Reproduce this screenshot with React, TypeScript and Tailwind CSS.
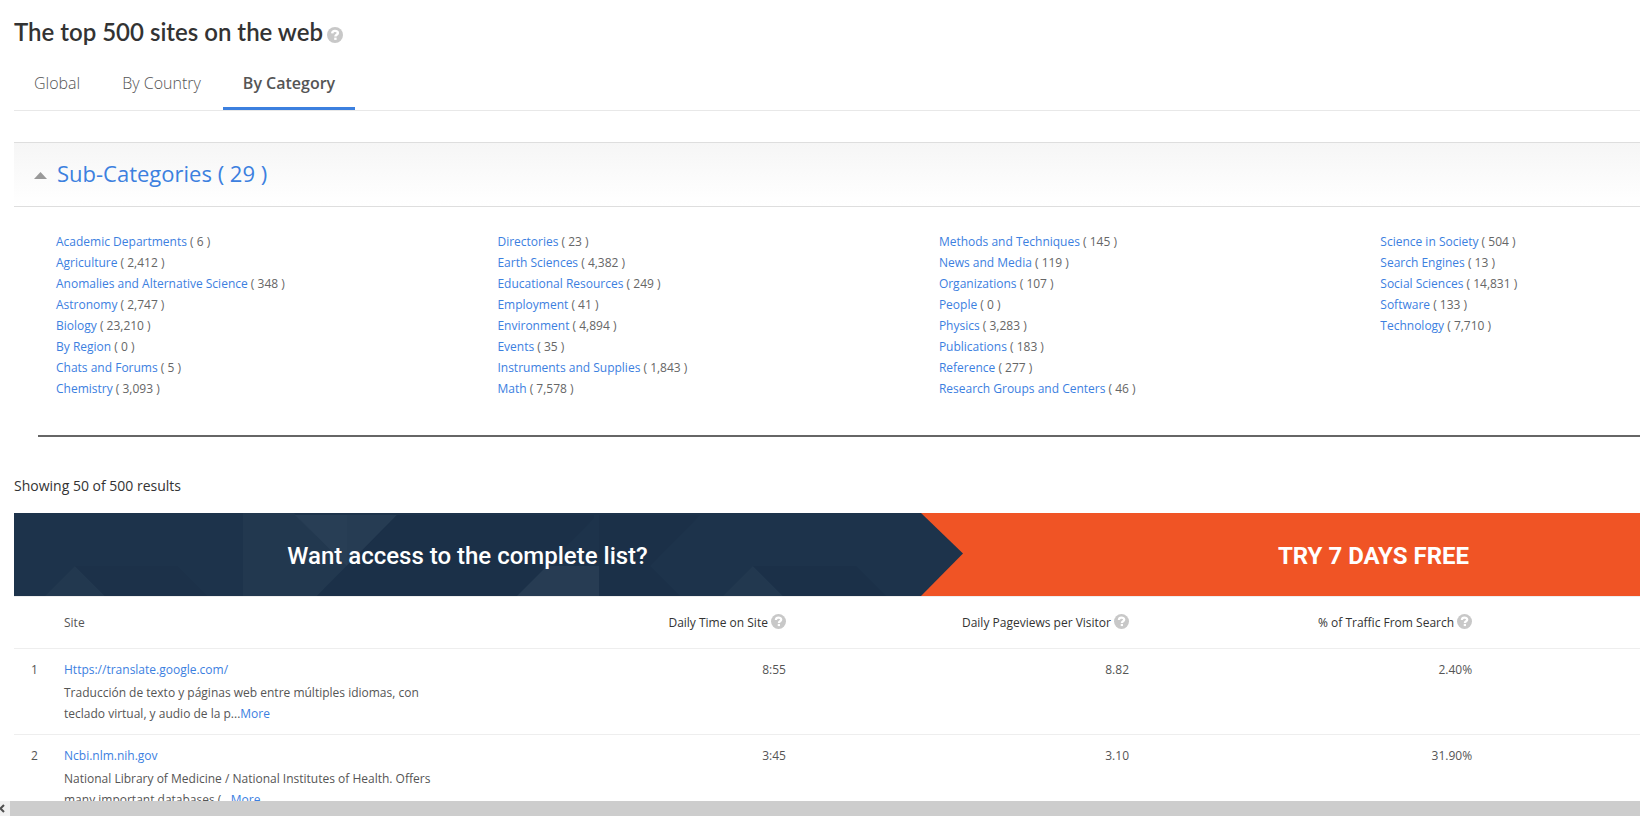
import { useState } from 'react';

interface Category {
  name: string;
  count: string;
}

interface Site {
  rank: number;
  name: string;
  description: string;
  time: string;
  pageviews: string;
  search: string;
}

const tabs = ['Global', 'By Country', 'By Category'];

const categoryColumns: Category[][] = [
  [
    { name: 'Academic Departments', count: '6' },
    { name: 'Agriculture', count: '2,412' },
    { name: 'Anomalies and Alternative Science', count: '348' },
    { name: 'Astronomy', count: '2,747' },
    { name: 'Biology', count: '23,210' },
    { name: 'By Region', count: '0' },
    { name: 'Chats and Forums', count: '5' },
    { name: 'Chemistry', count: '3,093' },
  ],
  [
    { name: 'Directories', count: '23' },
    { name: 'Earth Sciences', count: '4,382' },
    { name: 'Educational Resources', count: '249' },
    { name: 'Employment', count: '41' },
    { name: 'Environment', count: '4,894' },
    { name: 'Events', count: '35' },
    { name: 'Instruments and Supplies', count: '1,843' },
    { name: 'Math', count: '7,578' },
  ],
  [
    { name: 'Methods and Techniques', count: '145' },
    { name: 'News and Media', count: '119' },
    { name: 'Organizations', count: '107' },
    { name: 'People', count: '0' },
    { name: 'Physics', count: '3,283' },
    { name: 'Publications', count: '183' },
    { name: 'Reference', count: '277' },
    { name: 'Research Groups and Centers', count: '46' },
  ],
  [
    { name: 'Science in Society', count: '504' },
    { name: 'Search Engines', count: '13' },
    { name: 'Social Sciences', count: '14,831' },
    { name: 'Software', count: '133' },
    { name: 'Technology', count: '7,710' },
  ],
];

const sites: Site[] = [
  {
    rank: 1,
    name: 'Https://translate.google.com/',
    description: 'Traducción de texto y páginas web entre múltiples idiomas, con teclado virtual, y audio de la p...',
    time: '8:55',
    pageviews: '8.82',
    search: '2.40%',
  },
  {
    rank: 2,
    name: 'Ncbi.nlm.nih.gov',
    description: 'National Library of Medicine / National Institutes of Health. Offers many important databases (...',
    time: '3:45',
    pageviews: '3.10',
    search: '31.90%',
  },
];

const metrics = ['Daily Time on Site', 'Daily Pageviews per Visitor', '% of Traffic From Search'];

function HelpIcon({ className }: { className: string }) {
  return (
    <svg viewBox="0 0 16 16" className={className} aria-hidden="true">
      <circle cx="8" cy="8" r="8" fill="#c8c8c8" />
      <path d="M5.2 6.4C5.3 4.6 6.4 3.9 8 3.9s2.9.8 2.9 2.1c0 1.8-2.5 1.7-2.5 3.5" fill="none" stroke="#fff" strokeWidth="2.4" />
      <rect x="7.2" y="10.6" width="2.4" height="2.3" fill="#fff" />
    </svg>
  );
}

function Banner() {
  return (
    <a href="#trial" className="relative flex h-[83px] overflow-hidden bg-[#f05425] text-white">
      <svg viewBox="0 0 949 83" className="absolute left-0 top-0 h-[83px] w-[949px]" aria-hidden="true">
        <path d="M0 0H907L949 40.5L907 83H0Z" fill="#1d334b" />
        <path d="M61 53L31 83H91Z" fill="#22384f" />
        <path d="M61 53H163L193 83H91Z" fill="#1c3149" />
        <path d="M229 0H280L333 53L303 83H229Z" fill="#22384f" />
        <path d="M281 2H383L333 53Z" fill="#263c53" />
        <path d="M333 2V53L281 2Z" fill="#283e55" />
        <path d="M383 2H580V83H303Z" fill="#1b3048" />
        <path d="M580 5L533 53H580Z" fill="#1d334b" />
        <path d="M533 53H585V83H503Z" fill="#273c53" />
        <path d="M585 2H686L636 53L666 83H585Z" fill="#1b3048" />
        <path d="M739 53L709 83H769Z" fill="#22384f" />
        <path d="M739 53H842L872 83H769Z" fill="#1b3048" />
      </svg>
      <span className="relative flex w-[907px] shrink-0 items-center justify-center pt-0.5 font-[Roboto,sans-serif] text-[24px] font-medium">
        Want access to the complete list?
      </span>
      <span className="flex grow items-center justify-center pt-0.5 pl-[186px] font-[Roboto,sans-serif] text-[24px] font-bold">
        TRY 7 DAYS FREE
      </span>
    </a>
  );
}

export default function App() {
  const [activeTab, setActiveTab] = useState('By Category');
  const [open, setOpen] = useState(true);

  return (
    <div className="flex h-screen flex-col overflow-hidden bg-white font-['Open_Sans',sans-serif] text-[12px] text-[#555]">
      <main className="min-h-0 grow overflow-hidden pl-3.5">
        <header className="flex items-center gap-1 pt-4">
          <h1 className="font-[Lato,sans-serif] text-[24px] leading-8 font-semibold text-[#333]">The top 500 sites on the web</h1>
          <HelpIcon className="mt-1.5 size-4" />
        </header>

        <nav className="mt-2.5 flex h-[53px] gap-0.5 border-b border-[#e8e8e8]">
          {tabs.map((tab) => (
            <button
              key={tab}
              onClick={() => setActiveTab(tab)}
              className={
                tab === activeTab
                  ? 'border-b-3 border-[#3c80df] px-5 text-[16px] font-semibold text-[#555]'
                  : 'border-b-3 border-transparent px-5 text-[16px] font-light text-[#555]'
              }
            >
              {tab}
            </button>
          ))}
        </nav>

        <section className="mt-[31px]">
          <h2 className="border-y border-[#dedede] bg-linear-to-b from-[#f6f6f6] to-white">
            <button
              onClick={() => setOpen(!open)}
              aria-expanded={open}
              className="flex h-[63px] w-full items-center gap-2.5 pb-0.5 pl-5 text-[22px] text-[#3c80df]"
            >
              <svg viewBox="0 0 13 7" className="mt-1 h-[7px] w-[13px]" aria-hidden="true">
                <path d="M0 7L6.5 0L13 7Z" fill="#999" />
              </svg>
              Sub-Categories ( 29 )
            </button>
          </h2>
          {open && (
            <div className="grid grid-cols-[1.7fr_1.7fr_1.7fr_1fr] pt-6 pb-9 pl-[42px]">
              {categoryColumns.map((column) => (
                <ul key={column[0].name}>
                  {column.map((category) => (
                    <li key={category.name} className="leading-[21px] text-[#666]">
                      <a href="#category" className="text-[#3c80df]">{category.name}</a> ( {category.count} )
                    </li>
                  ))}
                </ul>
              ))}
            </div>
          )}
          <hr className="ml-6 border-t-2 border-[#666]" />
        </section>

        <p className="mt-[38px] mb-[17px] text-[14px] leading-[21px] text-[#333]">Showing 50 of 500 results</p>

        <Banner />

        <table className="w-full table-fixed border-t border-[#eee]">
          <thead>
            <tr className="h-[52px] border-b border-[#eee]">
              <th className="w-[50px]" />
              <th className="w-[23.3%] text-left font-medium">Site</th>
              {metrics.map((metric) => (
                <th key={metric} className="w-[21.1%] text-right font-medium text-[#333]">
                  <span className="inline-flex items-center gap-[3px]">
                    {metric}
                    <HelpIcon className="mb-0.5 size-[15px]" />
                  </span>
                </th>
              ))}
              <th />
            </tr>
          </thead>
          <tbody>
            {sites.map((site) => (
              <tr key={site.rank} className="border-b border-[#eee] align-top leading-[21px]">
                <td className="w-[50px] pt-2.5 pl-[17px]">{site.rank}</td>
                <td className="pt-2.5 pb-2.5">
                  <a href="#site" className="text-[#3c80df]">{site.name}</a>
                  <p className="mt-0.5">
                    {site.description}
                    <a href="#more" className="text-[#3c80df]">More</a>
                  </p>
                </td>
                <td className="pt-2.5 text-right">{site.time}</td>
                <td className="pt-2.5 text-right">{site.pageviews}</td>
                <td className="pt-2.5 text-right">{site.search}</td>
                <td />
              </tr>
            ))}
          </tbody>
        </table>
      </main>

      <div className="flex h-[15px] shrink-0 bg-[#cdcdcd]">
        <button aria-label="Scroll left" className="w-2.5 bg-[#f0f0f0]">
          <svg viewBox="0 0 10 15" className="h-[15px] w-2.5" aria-hidden="true">
            <path d="M4 4L0.5 7.5L4 11" fill="none" stroke="#505050" strokeWidth="2" />
          </svg>
        </button>
      </div>
    </div>
  );
}
